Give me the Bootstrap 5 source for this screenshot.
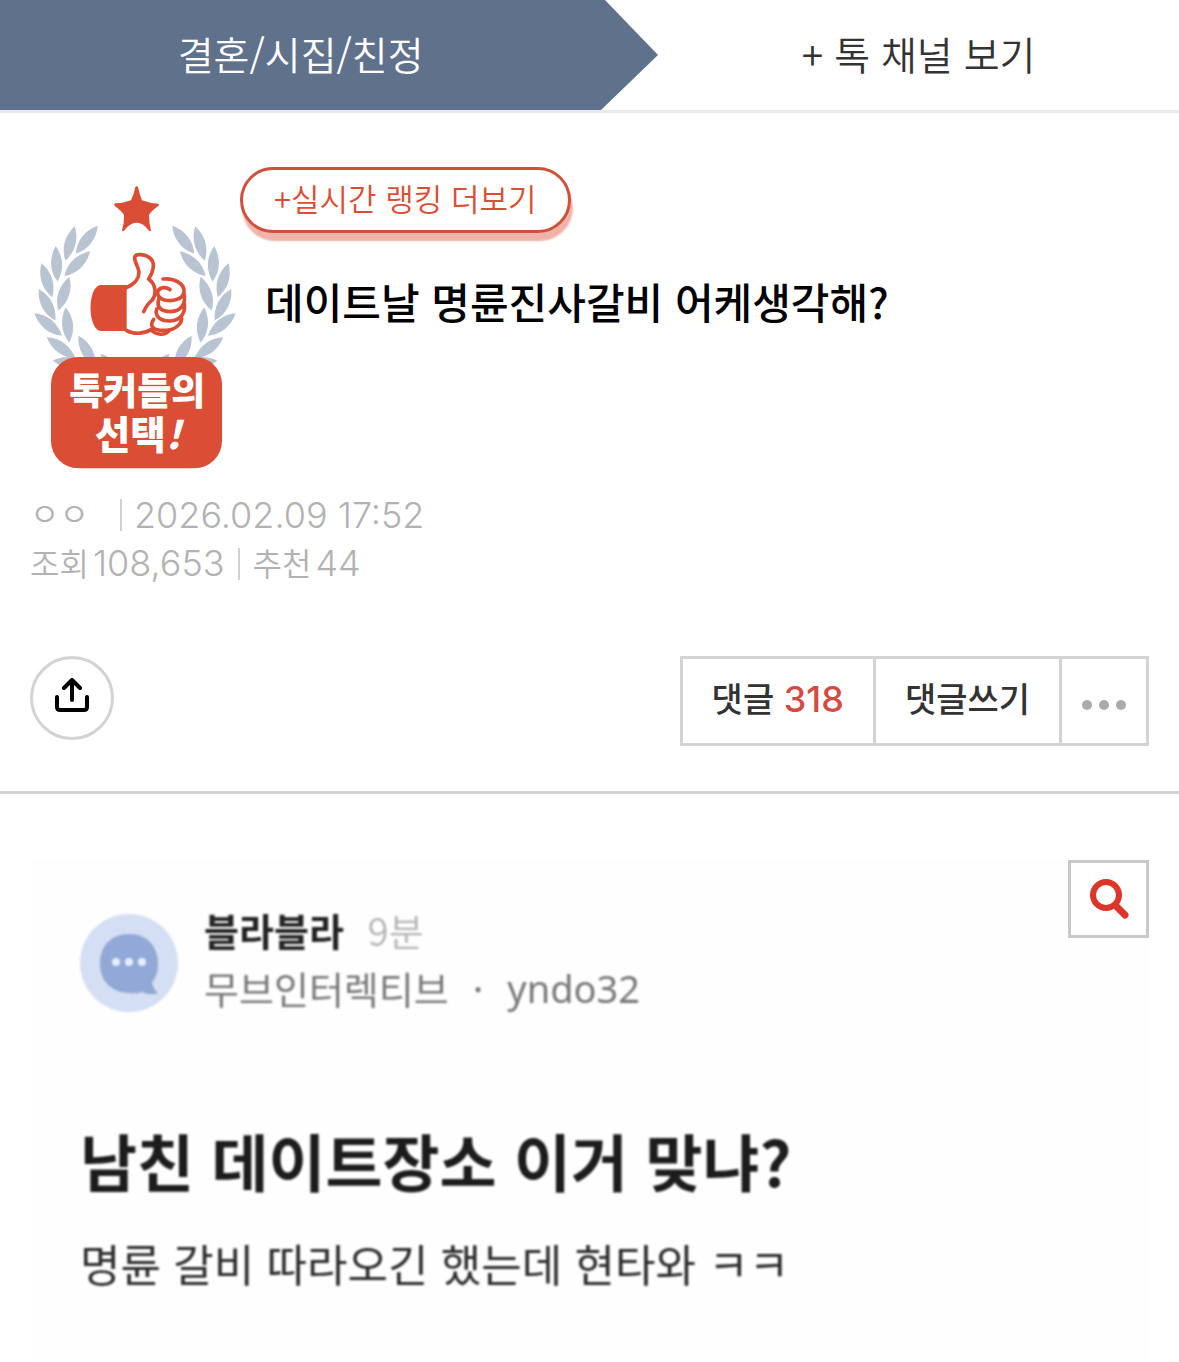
<!DOCTYPE html>
<html lang="ko">
<head>
<meta charset="utf-8">
<meta name="viewport" content="width=device-width, initial-scale=1">
<title>데이트날 명륜진사갈비 어케생각해?</title>
<link href="https://cdn.jsdelivr.net/npm/bootstrap@5.3.0/dist/css/bootstrap.min.css" rel="stylesheet">
<style>
  :root { --slate: #60718b; --coral: #d94e34; --rule: #d3d3d3; --muted: #b2b2b2; }
  body { font-family: "Noto Sans CJK KR", sans-serif; color: #000; background: #fff; }
  a { text-decoration: none; }
  .channel-bar { height: 113px; border-bottom: 3px solid #e9e9e9; font-size: 39px; line-height: 48px; font-weight: 350; }
  .channel-bar a { padding-bottom: 4px; }
  .channel-current { width: 51%; background: var(--slate); color: #fff; }
  .channel-arrow { width: 57px; height: 110px; fill: var(--slate); }
  .channel-more { color: #333; }
  .article-top { padding: 54px 30px 0; }
  .pick-badge { width: 210px; height: 292px; margin-top: 13px; }
  .rank-pill { border: 3px solid #cd513d; border-radius: 33px; height: 66px; padding: 0 31px; color: var(--coral);
    font-size: 31px; line-height: 56px; font-weight: 350; background: #fff; box-shadow: 2px 8px 2px #efb3a9; }
  .article-title { font-size: 42px; line-height: 60px; font-weight: 500; margin: 38px 0 0 25px; }
  .meta-info { font-family: Inter, "Noto Sans CJK KR", sans-serif; color: var(--muted); font-size: 36px; line-height: 48px; font-weight: 300; padding: 19px 30px 0; }
  .meta-info .ko { font-size: 32px; font-weight: 350; }
  .meta-bar { width: 2px; height: 32px; background: #d0d0d0; }
  .meta-author { width: 90px; }
  .meta-line { gap: 13px; }
  .tool-row { padding: 67px 30px 45px; border-bottom: 3px solid var(--rule); }
  .share-btn { width: 84px; height: 84px; border: 3px solid var(--rule); border-radius: 50%; background: #fff; }
  .reply-group > * { border: 3px solid var(--rule); margin-left: -3px; height: 90px; background: #fff; color: #333;
    font-size: 34px; line-height: 78px; font-weight: 500; padding: 0 29px; }
  .reply-group .more-btn { padding: 0; width: 90px; }
  .reply-count { color: #d24b45; font-family: Inter, sans-serif; font-size: 36px; }
  .post-photo { margin: 66px 30px 0; background: #fefefe; }
  .photo-body { padding: 41px 50px 63px; filter: blur(1px); font-family: "Noto Sans CJK KR", "Noto Sans", sans-serif; }
  .poster { font-size: 38px; line-height: 58px; color: #777; }
  .poster strong { color: #222; }
  .poster time { color: #b4b4b4; font-weight: 350; }
  .poster-id { font-family: "Noto Sans", sans-serif; }
  .photo-heading { font-size: 62px; line-height: 90px; font-weight: 700; color: #1c1c1c; margin: 98px 0 22px; }
  .photo-text { font-size: 44px; line-height: 72px; color: #2c2c2c; }
  .zoom-btn { width: 81px; height: 78px; border: 3px solid #c9c9c9; background: #fff; }
</style>
</head>
<body>
<header>
  <nav class="channel-bar d-flex" aria-label="톡 채널">
    <a href="#" class="channel-current d-flex align-items-center justify-content-center">결혼/시집/친정</a>
    <svg class="channel-arrow flex-shrink-0" viewBox="0 0 57 110" aria-hidden="true"><path d="M-1 0H4L57 55 0 110H-1Z"/></svg>
    <a href="#" class="channel-more flex-fill d-flex align-items-center justify-content-center">+ 톡 채널 보기</a>
  </nav>
</header>

<main>
  <section class="article-top d-flex align-items-start">
    <svg class="pick-badge flex-shrink-0" viewBox="30 90 630 876" role="img" aria-label="톡커들의 선택!">
      <defs>
        <path id="leaf" d="M0 0C34-22 72-22 107 0C74 22 36 22 0 0Z"/>
        <g id="branch" fill="#b8c4d2">
          <use href="#leaf" transform="translate(233 227) rotate(128)"/>
          <use href="#leaf" transform="translate(164 229) rotate(105)"/>
          <use href="#leaf" transform="translate(210 304) rotate(136)"/>
          <use href="#leaf" transform="translate(107 288) rotate(87)"/>
          <use href="#leaf" transform="translate(148 380) rotate(108)"/>
          <use href="#leaf" transform="translate(64 340) rotate(72)"/>
          <use href="#leaf" transform="translate(56 417) rotate(62)"/>
          <use href="#leaf" transform="translate(137 472) rotate(84)"/>
          <use href="#leaf" transform="translate(43 490) rotate(39)"/>
          <use href="#leaf" transform="translate(80 562) rotate(36)"/>
          <use href="#leaf" transform="translate(175 557) rotate(61)"/>
          <use href="#leaf" transform="translate(242 611) rotate(50)"/>
          <use href="#leaf" transform="translate(98 632) rotate(6)"/>
        </g>
      </defs>
      <use href="#branch"/>
      <use href="#branch" transform="translate(690 0) scale(-1 1)"/>
      <g fill="#d94e34">
        <path d="M346 111Q350 106 354 111Q359 134 366 151Q390 160 415 161Q419 164 415 168Q395 182 387 195Q387 220 393 241Q392 246 387 242Q370 218 350 218Q330 218 312 242Q307 246 306 241Q313 218 312 195Q304 182 284 168Q281 163 285 160Q310 160 333 151Q342 133 346 111Z"/>
        <path d="M320 405H240C202 414 202 533 240 543H320Z"/>
        <rect x="93" y="621" width="513" height="334" rx="82"/>
      </g>
      <g fill="none" stroke="#d94e34" stroke-width="11" stroke-linecap="round" stroke-linejoin="round">
        <path d="M319 413C346 401 360 382 356 362C353 346 343 337 344 322C347 309 378 312 392 326C406 340 400 366 386 387C408 403 411 434 395 452C382 462 377 472 371 485"/>
        <path d="M319 541C340 553 370 553 393 539C408 557 437 557 449 540"/>
        <path d="M429 387C466 384 494 402 492 426C489 449 456 456 431 449C407 441 407 416 431 413Q443 412 450 419"/>
        <path d="M491 429C500 458 485 484 452 485C423 485 409 471 416 449M493 462C497 492 480 511 450 513C419 513 404 498 410 477M484 500C489 519 467 540 437 541C402 543 385 530 401 508"/>
      </g>
      <g fill="#fff" font-family="Noto Sans CJK KR, sans-serif" font-weight="900" text-anchor="middle">
        <text x="352" y="764" font-size="111">톡커들의</text>
        <text x="354" y="896" font-size="116">선택<tspan font-style="italic">!</tspan></text>
      </g>
    </svg>
    <div class="flex-fill">
      <a href="#" class="rank-pill d-inline-block">+실시간 랭킹 더보기</a>
      <h1 class="article-title">데이트날 명륜진사갈비 어케생각해?</h1>
    </div>
  </section>

  <section class="meta-info">
    <div class="d-flex align-items-center"><span class="ko meta-author">ㅇㅇ</span><span class="meta-bar me-2"></span><time class="ps-1">2026.02.09 17:52</time></div>
    <div class="meta-line d-flex align-items-center"><span><span class="ko me-1">조회</span>108,653</span><span class="meta-bar"></span><span><span class="ko me-1">추천</span>44</span></div>
  </section>

  <section class="tool-row d-flex justify-content-between align-items-start">
    <button type="button" class="share-btn p-0 d-flex align-items-center justify-content-center" aria-label="공유">
      <svg class="mb-1" width="36" height="36" viewBox="0 0 36 36" fill="none" stroke="#000" stroke-width="4" stroke-linecap="round" stroke-linejoin="round" aria-hidden="true"><path d="M18 22V2M10 10l8-8 8 8M3 19v10q0 3 3 3h24q3 0 3-3V19"/></svg>
    </button>
    <div class="reply-group d-flex">
      <a href="#">댓글 <span class="reply-count">318</span></a>
      <a href="#">댓글쓰기</a>
      <button type="button" class="more-btn" aria-label="더보기">
        <svg class="d-block mx-auto mt-2" width="44" height="10" viewBox="0 0 44 10" fill="#aaa" aria-hidden="true"><circle cx="5" cy="5" r="5"/><circle cx="22" cy="5" r="5"/><circle cx="39" cy="5" r="5"/></svg>
      </button>
    </div>
  </section>

  <article class="post-photo position-relative">
    <div class="photo-body">
      <div class="poster d-flex align-items-center">
        <svg class="flex-shrink-0 me-4 mt-2" width="100" height="98" viewBox="0 0 100 98" aria-hidden="true">
          <circle cx="49" cy="49" r="49" fill="#d4dff3"/>
          <path d="M49 20C68 20 78 33 78 50Q78 62 72 68Q73 75 78 79Q70 82 62 78Q56 80 49 79C31 78 20 67 20 50C20 32 31 20 49 20Z" fill="#92a8d6"/>
          <g fill="#e6efff"><circle cx="36" cy="48" r="4"/><circle cx="49" cy="48" r="4"/><circle cx="62" cy="48" r="4"/></g>
        </svg>
        <div>
          <div class="d-flex"><strong class="me-4">블라블라</strong><time>9분</time></div>
          <div class="d-flex gap-4"><span>무브인터렉티브</span><span>·</span><span class="poster-id">yndo32</span></div>
        </div>
      </div>
      <h2 class="photo-heading">남친 데이트장소 이거 맞냐?</h2>
      <p class="photo-text mb-0">명륜 갈비 따라오긴 했는데 현타와 ㅋㅋ</p>
    </div>
    <button type="button" class="zoom-btn position-absolute top-0 end-0 p-0 d-flex align-items-center justify-content-center" aria-label="확대">
      <svg width="42" height="42" viewBox="0 0 42 42" fill="none" stroke="#dc3529" aria-hidden="true"><circle cx="18" cy="17" r="13" stroke-width="6"/><path d="M28 28l9 9" stroke-width="7" stroke-linecap="round"/></svg>
    </button>
  </article>
</main>
<script src="https://cdn.jsdelivr.net/npm/bootstrap@5.3.0/dist/js/bootstrap.bundle.min.js"></script>
</body>
</html>
